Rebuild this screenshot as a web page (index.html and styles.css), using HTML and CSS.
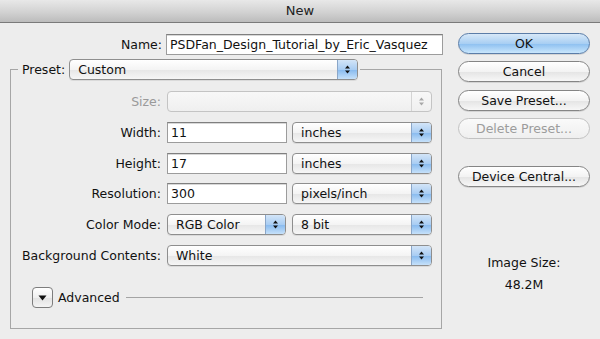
FILE: index.html
```html
<!DOCTYPE html>
<html lang="en">
<head>
    <meta charset="UTF-8">
    <meta name="viewport" content="width=device-width, initial-scale=1.0">
    <title>New</title>
    <link rel="stylesheet" href="styles.css">
</head>
<body>
    <div class="titlebar">New</div>

    <div class="dialog">
        <div class="main">
            <div class="name-row">
                <label>Name:</label>
                <div class="textbox">PSDFan_Design_Tutorial_by_Eric_Vasquez</div>
            </div>

            <fieldset class="preset">
                <legend>
                    <span class="legend-label">Preset:</span>
                    <div class="popup preset-popup">
                        <span class="popup-text">Custom</span>
                        <span class="popup-arrows">
                            <svg width="7" height="11" viewBox="0 0 7 11"><path d="M3.5 1.5 L6 4.5 L1 4.5 Z M3.5 9.5 L6 6.5 L1 6.5 Z"/></svg>
                        </span>
                    </div>
                </legend>

                <div class="rows">
                    <label class="disabled">Size:</label>
                    <div class="popup disabled-popup">
                        <span class="popup-text"></span>
                        <span class="popup-arrows">
                            <svg width="7" height="11" viewBox="0 0 7 11"><path d="M3.5 1.5 L6 4.5 L1 4.5 Z M3.5 9.5 L6 6.5 L1 6.5 Z"/></svg>
                        </span>
                    </div>

                    <label>Width:</label>
                    <div class="pair">
                        <div class="textbox short">11</div>
                        <div class="popup unit">
                            <span class="popup-text">inches</span>
                            <span class="popup-arrows">
                                <svg width="7" height="11" viewBox="0 0 7 11"><path d="M3.5 1.5 L6 4.5 L1 4.5 Z M3.5 9.5 L6 6.5 L1 6.5 Z"/></svg>
                            </span>
                        </div>
                    </div>

                    <label>Height:</label>
                    <div class="pair">
                        <div class="textbox short">17</div>
                        <div class="popup unit">
                            <span class="popup-text">inches</span>
                            <span class="popup-arrows">
                                <svg width="7" height="11" viewBox="0 0 7 11"><path d="M3.5 1.5 L6 4.5 L1 4.5 Z M3.5 9.5 L6 6.5 L1 6.5 Z"/></svg>
                            </span>
                        </div>
                    </div>

                    <label>Resolution:</label>
                    <div class="pair">
                        <div class="textbox short">300</div>
                        <div class="popup unit">
                            <span class="popup-text">pixels/inch</span>
                            <span class="popup-arrows">
                                <svg width="7" height="11" viewBox="0 0 7 11"><path d="M3.5 1.5 L6 4.5 L1 4.5 Z M3.5 9.5 L6 6.5 L1 6.5 Z"/></svg>
                            </span>
                        </div>
                    </div>

                    <label>Color Mode:</label>
                    <div class="pair">
                        <div class="popup mode">
                            <span class="popup-text">RGB Color</span>
                            <span class="popup-arrows">
                                <svg width="7" height="11" viewBox="0 0 7 11"><path d="M3.5 1.5 L6 4.5 L1 4.5 Z M3.5 9.5 L6 6.5 L1 6.5 Z"/></svg>
                            </span>
                        </div>
                        <div class="popup unit">
                            <span class="popup-text">8 bit</span>
                            <span class="popup-arrows">
                                <svg width="7" height="11" viewBox="0 0 7 11"><path d="M3.5 1.5 L6 4.5 L1 4.5 Z M3.5 9.5 L6 6.5 L1 6.5 Z"/></svg>
                            </span>
                        </div>
                    </div>

                    <label>Background Contents:</label>
                    <div class="popup">
                        <span class="popup-text">White</span>
                        <span class="popup-arrows">
                            <svg width="7" height="11" viewBox="0 0 7 11"><path d="M3.5 1.5 L6 4.5 L1 4.5 Z M3.5 9.5 L6 6.5 L1 6.5 Z"/></svg>
                        </span>
                    </div>
                </div>

                <div class="advanced">
                    <div class="disclosure">
                        <svg width="9" height="6" viewBox="0 0 9 6"><path d="M0.5 0.5 L8.5 0.5 L4.5 5.5 Z"/></svg>
                    </div>
                    <span class="advanced-label">Advanced</span>
                    <div class="advanced-line"></div>
                </div>
            </fieldset>
        </div>

        <div class="side">
            <div class="button default">OK</div>
            <div class="button">Cancel</div>
            <div class="button">Save Preset...</div>
            <div class="button disabled">Delete Preset...</div>
            <div class="button device">Device Central...</div>

            <div class="image-size">
                <div>Image Size:</div>
                <div class="image-size-value">48.2M</div>
            </div>
        </div>
    </div>
</body>
</html>
```

FILE: styles.css
```css
* {
    box-sizing: border-box;
    margin: 0;
    padding: 0;
}

body {
    background-color: #ededed;
    color: #111;
    font-family: 'DejaVu Sans', 'Liberation Sans', sans-serif;
    font-size: 12.5px;
    overflow: hidden;
}

.titlebar {
    height: 23px;
    line-height: 22px;
    text-align: center;
    font-size: 13px;
    color: #222;
    background: linear-gradient(#e8e8e8, #d2d2d2 55%, #bcbcbc);
    border-bottom: 1px solid #7a7a7a;
}

.dialog {
    display: flex;
    padding-top: 11px;
}

.main {
    width: 448px;
}

.name-row {
    display: grid;
    grid-template-columns: 162px 277px;
    column-gap: 4px;
    align-items: center;
}

.name-row label {
    text-align: right;
}

.textbox {
    height: 21px;
    line-height: 19px;
    padding: 0 3px;
    background: #fff;
    border: 1px solid #9c9c9c;
    border-top-color: #7f7f7f;
    box-shadow: inset 0 1px 0 #d8d8d8;
    white-space: nowrap;
    overflow: hidden;
}

.textbox.short {
    width: 120px;
}

/* preset box */
.preset {
    margin: 4px 0 0 10px;
    width: 432px;
    border: 1px solid #a6a6a6;
    padding: 11px 9px 20px 0;
}

.preset legend {
    display: flex;
    align-items: center;
    margin-left: 7px;
    padding: 0 2px 0 4px;
}

.legend-label {
    margin-right: 4px;
}

.preset-popup {
    width: 289px;
    height: 22px;
}

.rows {
    display: grid;
    grid-template-columns: 150px 265px;
    grid-auto-rows: 21px;
    column-gap: 6px;
    row-gap: 9.8px;
    align-items: center;
}

.rows label {
    text-align: right;
    white-space: nowrap;
}

.rows label.disabled {
    color: #9a9a9a;
}

.pair {
    display: flex;
    justify-content: space-between;
}

/* pop-up menus */
.popup {
    display: flex;
    height: 21px;
    border: 1px solid #8e8e8e;
    border-radius: 4px;
    background: linear-gradient(#ffffff, #f4f4f4 50%, #e6e6e6 51%, #f6f6f6);
    box-shadow: 0 1px 0 rgba(0, 0, 0, 0.08);
    overflow: hidden;
}

.popup-text {
    flex: 1;
    padding-left: 8px;
    line-height: 19px;
    white-space: nowrap;
}

.popup-arrows {
    width: 20px;
    display: flex;
    align-items: center;
    justify-content: center;
    border-left: 1px solid #8aa6c8;
    background: linear-gradient(#d3e5f8, #a9cdf3 50%, #86b9ee 51%, #c6e1fa);
}

.popup-arrows svg {
    fill: #111;
}

.popup.unit {
    width: 140px;
}

.popup.mode {
    width: 119px;
}

.disabled-popup {
    border-color: #c4c4c4;
    background: linear-gradient(#f8f8f8, #efefef);
    box-shadow: none;
}

.disabled-popup .popup-arrows {
    border-left: 1px solid #d4d4d4;
    background: none;
}

.disabled-popup .popup-arrows svg {
    fill: #a8a8a8;
}

/* advanced */
.advanced {
    display: flex;
    align-items: center;
    margin-top: 21px;
    padding-left: 21px;
}

.disclosure {
    width: 21px;
    height: 21px;
    display: flex;
    align-items: center;
    justify-content: center;
    border: 1px solid #7d7d7d;
    border-radius: 4px;
    background: linear-gradient(#ffffff, #f0f0f0 50%, #e2e2e2 51%, #f4f4f4);
}

.disclosure svg {
    fill: #111;
    margin-top: 1px;
}

.advanced-label {
    margin-left: 5px;
}

.advanced-line {
    flex: 1;
    height: 1px;
    margin: 0 9px 0 6px;
    background: #a4a4a4;
}

/* side buttons */
.side {
    margin: -1px 0 0 10px;
    width: 132px;
    display: flex;
    flex-direction: column;
    gap: 7.3px;
}

.button {
    height: 21px;
    line-height: 19px;
    text-align: center;
    border: 1px solid #858585;
    border-radius: 11px;
    background: linear-gradient(#ffffff, #f3f3f3 50%, #e4e4e4 51%, #f7f7f7);
    box-shadow: 0 1px 0 rgba(0, 0, 0, 0.1);
}

.button.default {
    border-color: #5b7da8;
    background: linear-gradient(#d7e8f8, #a9cff3 50%, #8cbff0 51%, #c9e6fc);
}

.button.disabled {
    color: #9c9c9c;
    border-color: #c2c2c2;
    background: linear-gradient(#fafafa, #efefef);
    box-shadow: none;
}

.button.device {
    margin-top: 20px;
}

.image-size {
    margin-top: 61px;
    text-align: center;
}

.image-size-value {
    margin-top: 7px;
}
```
